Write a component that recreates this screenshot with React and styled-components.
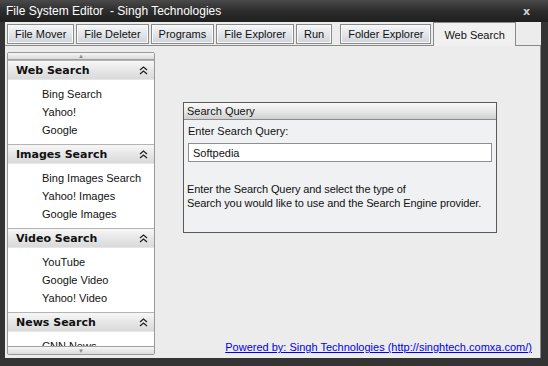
import React from "react";
import styled, { createGlobalStyle } from "styled-components";

const Global = createGlobalStyle`
  html, body { margin: 0; padding: 0; background: #2b2b2b; }
  body { font-family: "Liberation Sans", Arial, sans-serif; }
`;

const Window = styled.div`
  width: 548px;
  height: 366px;
  display: flex;
  flex-direction: column;
  background: #343434;
  overflow: hidden;
`;

const TitleBar = styled.div`
  height: 22px;
  flex: none;
  display: flex;
  align-items: center;
  justify-content: space-between;
  padding: 0 18px 0 6px;
  background: linear-gradient(#4a4a4a, #2c2c2c 50%, #1f1f1f);
  color: #fff;
  font-size: 12px;
`;

const Close = styled.span`
  font-family: "DejaVu Sans", sans-serif;
  font-weight: bold;
  font-size: 11px;
  color: #d0d0d0;
`;

const Body = styled.div`
  flex: 1;
  min-height: 0;
  margin: 0 7px 8px 5px;
  background: #ececec;
  display: flex;
  flex-direction: column;
`;

const TabStrip = styled.div`
  height: 23px;
  flex: none;
  display: flex;
  align-items: flex-end;
  padding-left: 2px;
  gap: 2px;
`;

const Tab = styled.div`
  height: ${({ $active }) => ($active ? "23px" : "18px")};
  padding: 0 ${({ $active }) => ($active ? "10px" : "7px")};
  margin-bottom: ${({ $active }) => ($active ? "-1px" : "1px")};
  margin-left: ${({ $gap }) => ($gap ? "6px" : "0")};
  display: flex;
  align-items: center;
  white-space: nowrap;
  font-size: 11px;
  color: #111;
  border: 1px solid #8a8a8a;
  border-bottom: ${({ $active }) => ($active ? "none" : "1px solid #8a8a8a")};
  background: ${({ $active }) =>
    $active ? "#f0f0f0" : "linear-gradient(#f6f7f8, #dfe2e6 60%, #cfd3d8)"};
  box-shadow: ${({ $active }) => ($active ? "none" : "inset 0 0 0 1px #fafafa")};
  z-index: ${({ $active }) => ($active ? 2 : 1)};
  position: relative;
`;

const TabPage = styled.div`
  flex: 1;
  min-height: 0;
  border-top: 1px solid #8a8a8a;
  border-right: 1px solid #8a8a8a;
  display: flex;
  padding: 6px 0 3px 2px;
`;

const SidePanel = styled.div`
  width: 146px;
  flex: none;
  display: flex;
  flex-direction: column;
  border: 1px solid #9a9a9a;
  border-radius: 2px;
  background: #fff;
  overflow: hidden;
`;

const ScrollCap = styled.div`
  height: ${({ $bottom }) => ($bottom ? "7px" : "6px")};
  flex: none;
  background: linear-gradient(#f6f6f6, #dadada);
  border-${({ $bottom }) => ($bottom ? "top" : "bottom")}: 1px solid #a0a0a0;
  display: flex;
  justify-content: center;
  align-items: center;
  font-size: 6px;
  color: #8a8a8a;
  line-height: 1;
`;

const SideScroll = styled.div`
  flex: 1;
  min-height: 0;
  overflow: hidden;
`;

const GroupHeader = styled.div`
  height: 18px;
  display: flex;
  align-items: center;
  justify-content: space-between;
  padding: 0 6px 0 8px;
  background: linear-gradient(#f7f7f7, #e4e4e4 60%, #dadada);
  border-top: 1px solid #b4b4b4;
  border-bottom: 1px solid #e6e6e6;
  font-family: "DejaVu Sans", Verdana, sans-serif;
  font-weight: bold;
  font-size: 11px;
  color: #111;
`;

const GroupItems = styled.div`
  display: flex;
  flex-direction: column;
  padding: 5px 0 5px 34px;
`;

const Item = styled.div`
  height: 18px;
  line-height: 18px;
  font-size: 11px;
  white-space: nowrap;
  color: #111;
`;

const Main = styled.div`
  flex: 1;
  display: flex;
  flex-direction: column;
  align-items: flex-start;
  padding: 50px 0 0 28px;
  position: relative;
`;

const QueryBox = styled.div`
  width: 312px;
  height: 129px;
  border: 1px solid #5a5a5a;
  background: #f0f1f3;
  display: flex;
  flex-direction: column;
`;

const QueryHeader = styled.div`
  height: 16px;
  display: flex;
  align-items: center;
  padding-left: 3px;
  font-size: 11px;
  color: #111;
  background: linear-gradient(#fafafa, #e6e6e6 55%, #cfcfcf);
  border-bottom: 1px solid #8c8c8c;
`;

const Label = styled.div`
  font-size: 11px;
  color: #111;
  padding: 5px 0 0 4px;
`;

const Input = styled.div`
  margin: 6px 4px 0 4px;
  height: 17px;
  border: 1px solid #8e8e8e;
  background: #fff;
  display: flex;
  align-items: center;
  padding-left: 4px;
  font-size: 11px;
  color: #111;
`;

const HelpText = styled.div`
  margin-top: 20px;
  padding-left: 3px;
  font-size: 11px;
  line-height: 14px;
  letter-spacing: -0.1px;
  white-space: nowrap;
  color: #111;
`;

const Powered = styled.a`
  position: absolute;
  right: 8px;
  bottom: 2px;
  font-size: 11px;
  color: #0000ee;
  text-decoration: underline;
  white-space: nowrap;
`;

const Chevron = () => (
  <svg width="9" height="9" viewBox="0 0 9 9">
    <path d="M1 4 L4.5 1 L8 4 M1 8 L4.5 5 L8 8" stroke="#222" strokeWidth="1.3" fill="none" />
  </svg>
);

const groups = [
  { title: "Web Search", items: ["Bing Search", "Yahoo!", "Google"] },
  { title: "Images Search", items: ["Bing Images Search", "Yahoo! Images", "Google Images"] },
  { title: "Video Search", items: ["YouTube", "Google Video", "Yahoo! Video"] },
  { title: "News Search", items: ["CNN News", "BBC News", "Google News"] },
];

const tabs = ["File Mover", "File Deleter", "Programs", "File Explorer", "Run", "Folder Explorer", "Web Search"];

export default function App() {
  return (
    <>
      <Global />
      <Window>
        <TitleBar>
          <span>File System Editor&nbsp; - Singh Technologies</span>
          <Close>x</Close>
        </TitleBar>
        <Body>
          <TabStrip>
            {tabs.map((t) => (
              <Tab key={t} $active={t === "Web Search"} $gap={t === "Folder Explorer"}>
                {t}
              </Tab>
            ))}
          </TabStrip>
          <TabPage>
            <SidePanel>
              <ScrollCap>▲</ScrollCap>
              <SideScroll>
                {groups.map((g) => (
                  <div key={g.title}>
                    <GroupHeader>
                      {g.title}
                      <Chevron />
                    </GroupHeader>
                    <GroupItems>
                      {g.items.map((i) => (
                        <Item key={i}>{i}</Item>
                      ))}
                    </GroupItems>
                  </div>
                ))}
              </SideScroll>
              <ScrollCap $bottom>▼</ScrollCap>
            </SidePanel>
            <Main>
              <QueryBox>
                <QueryHeader>Search Query</QueryHeader>
                <Label>Enter Search Query:</Label>
                <Input>Softpedia</Input>
                <HelpText>
                  Enter the Search Query and select the type of
                  <br />
                  Search you would like to use and the Search Engine provider.
                </HelpText>
              </QueryBox>
              <Powered href="#">Powered by: Singh Technologies (http://singhtech.comxa.com/)</Powered>
            </Main>
          </TabPage>
        </Body>
      </Window>
    </>
  );
}
